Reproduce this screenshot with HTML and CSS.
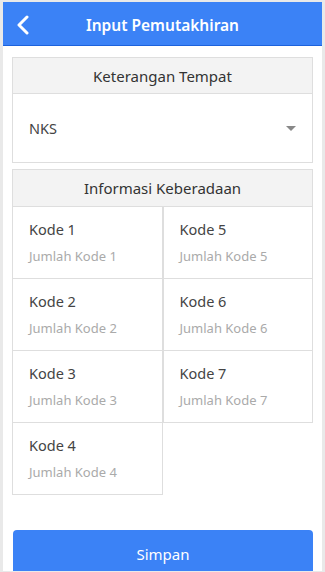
FILE: index.html
```html
<!DOCTYPE html>
<html lang="id">
<head>
    <meta charset="UTF-8">
    <meta name="viewport" content="width=device-width, initial-scale=1.0">
    <title>Input Pemutakhiran</title>
    <link rel="stylesheet" href="styles.css">
</head>
<body>
    <div class="app">

        <div class="topbar">
            <button type="button" class="back-btn" aria-label="Kembali">
                <svg width="14" height="20" viewBox="0 0 14 20">
                    <path d="M11 2 L3 10 L11 18" fill="none" stroke="#fff" stroke-width="3" stroke-linecap="round" stroke-linejoin="round"/>
                </svg>
            </button>
            <h1 class="topbar-title">Input Pemutakhiran</h1>
        </div>

        <div class="content">

            <div class="panel">
                <div class="panel-head">Keterangan Tempat</div>
                <div class="select-row">
                    <span class="select-value">NKS</span>
                    <span class="caret"></span>
                </div>
            </div>

            <div class="panel panel-info">
                <div class="panel-head">Informasi Keberadaan</div>
                <div class="kode-grid">
                    <div class="kode-col">
                        <div class="kode-cell">
                            <p class="kode-name">Kode 1</p>
                            <p class="kode-sub">Jumlah Kode 1</p>
                        </div>
                        <div class="kode-cell">
                            <p class="kode-name">Kode 2</p>
                            <p class="kode-sub">Jumlah Kode 2</p>
                        </div>
                        <div class="kode-cell">
                            <p class="kode-name">Kode 3</p>
                            <p class="kode-sub">Jumlah Kode 3</p>
                        </div>
                        <div class="kode-cell">
                            <p class="kode-name">Kode 4</p>
                            <p class="kode-sub">Jumlah Kode 4</p>
                        </div>
                    </div>
                    <div class="kode-col">
                        <div class="kode-cell">
                            <p class="kode-name">Kode 5</p>
                            <p class="kode-sub">Jumlah Kode 5</p>
                        </div>
                        <div class="kode-cell">
                            <p class="kode-name">Kode 6</p>
                            <p class="kode-sub">Jumlah Kode 6</p>
                        </div>
                        <div class="kode-cell">
                            <p class="kode-name">Kode 7</p>
                            <p class="kode-sub">Jumlah Kode 7</p>
                        </div>
                    </div>
                </div>
            </div>

            <button type="button" class="save-btn">Simpan</button>
        </div>
    </div>
</body>
</html>
```

FILE: styles.css
```css
* {
    margin: 0;
    padding: 0;
    box-sizing: border-box;
    font-family: "Noto Sans", "Open Sans", sans-serif;
}

body {
    background: #e9e9e9;
    height: 572px;
    overflow: hidden;
    padding: 2px 3px 1px 3px;
}

.app {
    background: #fff;
    height: 569px;
    overflow: hidden;
}

.topbar {
    height: 44px;
    background: #3b82f6;
    border-bottom: 1px solid #1c62dc;
    display: flex;
    align-items: center;
    justify-content: center;
    position: relative;
}

.back-btn {
    position: absolute;
    left: 10px;
    top: 12px;
    background: none;
    border: none;
    width: 20px;
    height: 22px;
    display: flex;
    align-items: center;
    justify-content: center;
}

.topbar-title {
    color: #fff;
    font-size: 15.5px;
    font-weight: 600;
    line-height: 20px;
    padding-top: 2px;
}

.content {
    padding: 11px 9px 0 9px;
}

.panel {
    border: 1px solid #dedede;
    margin-bottom: 6px;
}

.panel-info {
    border: none;
}

.panel-head {
    height: 36px;
    background: #f3f3f3;
    border-bottom: 1px solid #dedede;
    color: #333;
    font-size: 15px;
    display: flex;
    align-items: center;
    justify-content: center;
}

.panel-info .panel-head {
    height: 38px;
    border: 1px solid #dedede;
}

.select-row {
    height: 68px;
    display: flex;
    align-items: center;
    justify-content: space-between;
    padding: 0 16px 0 16px;
}

.select-value {
    font-size: 14.5px;
    color: #444;
}

.caret {
    width: 0;
    height: 0;
    border-left: 5px solid transparent;
    border-right: 5px solid transparent;
    border-top: 5px solid #888;
}

.kode-grid {
    display: grid;
    grid-template-columns: 1fr 1fr;
    align-items: start;
}

.kode-col {
    display: flex;
    flex-direction: column;
}

.kode-cell {
    height: 72px;
    border: 1px solid #dedede;
    border-top: none;
    padding: 12px 16px 0 16px;
}

.kode-name {
    font-size: 14.5px;
    color: #444;
    line-height: 20px;
}

.kode-sub {
    font-size: 13px;
    color: #aaa;
    line-height: 18px;
    margin-top: 8px;
}

.save-btn {
    display: block;
    width: 300px;
    height: 48px;
    margin: 35px 0 0 1px;
    background: #3b82f6;
    color: #fff;
    border: none;
    border-radius: 4px;
    font-size: 15px;
}
```
